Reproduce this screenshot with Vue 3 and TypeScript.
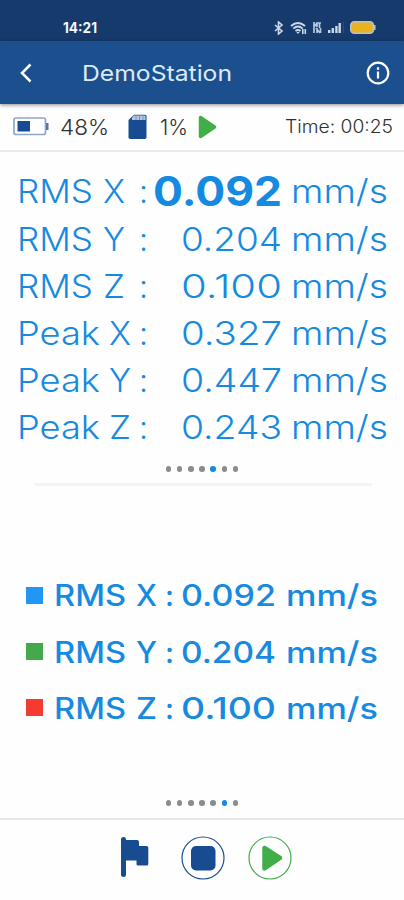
<script setup lang="ts">
import { h } from 'vue'

interface WordProps { text: string; w: number; size: number; weight?: number }

// A word stretched to a fixed advance width, sitting on a shared baseline.
const Word = (p: WordProps) =>
  h('svg', { class: 'word', width: p.w, height: p.size, viewBox: `0 0 ${p.w} ${p.size}` }, [
    h('text', {
      x: 0, y: p.size * 0.86, 'font-size': p.size, 'font-weight': p.weight ?? 300,
      textLength: p.w, lengthAdjust: 'spacingAndGlyphs', fill: 'currentColor',
    }, p.text),
  ])
Word.props = ['text', 'w', 'size', 'weight']

interface Reading { kind: string; axis: string; value: string; strong?: boolean }
const readings: Reading[] = [
  { kind: 'RMS', axis: 'X', value: '0.092', strong: true },
  { kind: 'RMS', axis: 'Y', value: '0.204' },
  { kind: 'RMS', axis: 'Z', value: '0.100' },
  { kind: 'Peak', axis: 'X', value: '0.327' },
  { kind: 'Peak', axis: 'Y', value: '0.447' },
  { kind: 'Peak', axis: 'Z', value: '0.243' },
]
const legend = [
  { axis: 'X', value: '0.092', tone: 'blue' },
  { axis: 'Y', value: '0.204', tone: 'green' },
  { axis: 'Z', value: '0.100', tone: 'red' },
]
</script>

<template>
  <main class="screen">
    <div class="status">
      <Word text="14:21" :w="34" :size="14" :weight="700" />
      <div class="sys">
        <svg width="10" height="14" viewBox="0 0 10 14"><path d="M1 4l7 6-3.500 3V1L8 4l-7 6" fill="none" stroke="#cbd9ea" stroke-width="1.600" /></svg>
        <svg width="17" height="14" viewBox="0 0 17 14"><g fill="none" stroke="#cbd9ea" stroke-width="1.900"><path d="M1 5q7-6 14 0M3.300 7.600q4.700-4 9.400 0M5.500 10q2.500-2 5 0" /></g><path d="M6.300 11h3.400L8 13zM12 8h1.600v5H12zM14.500 8h1.600v5h-1.600z" fill="#cbd9ea" /></svg>
        <svg width="9" height="12" viewBox="0 0 9 12"><path d="M1 0v5l3-4v4M5 1h3M6.500 1v5M1 6v5M3 6l4 5M4 6v5M7.500 6v5" fill="none" stroke="#b5c8df" stroke-width="1.700" /></svg>
        <svg width="16" height="12" viewBox="0 0 16 12"><path d="M0 8h2.400v3H0zM3.600 6H6v5H3.600zM7.200 4h2.400v7H7.200zM10.500 1h2.400v10h-2.400z" fill="#cbd9ea" /><path d="M14.800 0h.8v11h-.8z" fill="#3a5781" /></svg>
        <svg width="26" height="13" viewBox="0 0 26 13"><rect x=".8" y=".8" width="22.600" height="11.400" rx="3.500" fill="#e8b220" stroke="#b9c4c4" stroke-width="1.600" /><path d="M24.800 4v5" stroke="#b9c4c4" stroke-width="1.500" /></svg>
      </div>
    </div>

    <header class="bar">
      <svg class="back" width="14" height="20" viewBox="0 0 14 20"><path d="M11.500 1.500L3 10l8.500 8.500" fill="none" stroke="#fff" stroke-width="2.500" /></svg>
      <Word text="DemoStation" :w="150" :size="22" :weight="400" />
      <svg class="info" width="24" height="24" viewBox="0 0 24 24"><circle cx="12" cy="12" r="10.300" fill="none" stroke="#fff" stroke-width="2.200" /><path d="M12 10.500v7M12 6.300v2.400" stroke="#fff" stroke-width="2.200" /></svg>
    </header>

    <div class="info-row">
      <svg class="battery" width="36" height="19" viewBox="0 0 36 19"><rect x="1" y="1" width="31.500" height="16.500" rx="2" fill="#fff" stroke="#8ea7c8" stroke-width="1.700" /><path d="M33 6h2.500v7H33z" fill="#5578a8" /><path d="M4.500 4h12.500v10.500H4.500z" fill="#174d90" /></svg>
      <Word text="48%" :w="49" :size="21.5" />
      <svg class="card" width="19" height="26" viewBox="0 0 19 26"><path d="M6 .8h11q1.500 0 1.500 1.500v21q0 1.700-1.700 1.700H2.300Q.5 25 .5 23.300V6z" fill="#174d90" /><path d="M6 1.500h10.500q1 0 1 1V6H4V3.500z" fill="#b6c7dc" /><path d="M8 1.500v4.500M11.500 1.500v4.500M15 1.500v4.500" stroke="#7993b6" /></svg>
      <Word text="1%" :w="28" :size="21.5" />
      <svg class="run" width="19" height="24" viewBox="0 0 19 24"><path d="M2.500 2.500v19L16.500 12z" fill="#41ae49" stroke="#41ae49" stroke-width="3.500" stroke-linejoin="round" /></svg>
      <Word class="time" text="Time: 00:25" :w="108" :size="18" />
    </div>

    <section class="readings">
      <div v-for="r in readings" :key="r.kind + r.axis" class="reading">
        <div class="label">
          <Word :text="r.kind" :w="r.kind === 'RMS' ? 76 : 83" :size="32.5" />
          <Word :text="r.axis" :w="22" :size="32.5" />
        </div>
        <Word text=":" :w="9" :size="32.5" />
        <div class="value">
          <Word v-if="r.strong" :text="r.value" :w="129" :size="41" :weight="650" />
          <Word v-else :text="r.value" :w="101" :size="32.5" />
        </div>
        <Word text="mm/s" :w="97" :size="32.5" />
      </div>
    </section>

    <div class="dots"><i v-for="n in 7" :key="n" :class="{ on: n === 5 }" /></div>
    <hr class="divider">

    <section class="legend">
      <div v-for="l in legend" :key="l.axis" class="entry">
        <i class="swatch" :class="l.tone" />
        <div class="label">
          <Word text="RMS" :w="72" :size="29.5" :weight="550" />
          <Word :text="l.axis" :w="21" :size="29.5" :weight="550" />
        </div>
        <Word text=":" :w="9" :size="29.5" :weight="550" />
        <Word :text="l.value" :w="95" :size="29.5" :weight="550" />
        <Word text="mm/s" :w="92" :size="29.5" :weight="550" />
      </div>
    </section>

    <div class="dots"><i v-for="n in 7" :key="n" :class="{ on: n === 6 }" /></div>

    <footer class="actions">
      <svg width="30" height="42" viewBox="0 0 30 42"><path d="M3.500 3.500v35" stroke="#174d90" stroke-width="5" stroke-linecap="round" /><path d="M3.500 4H17q2 0 2 2v4h7.500q1.800 0 1.800 1.800V28q0 1.500-1.500 1.500H18q-1.500 0-1.500-1.500v-3.500h-13z" fill="#174d90" /></svg>
      <svg width="44" height="44" viewBox="0 0 44 44"><circle cx="22" cy="22" r="21" fill="none" stroke="#174d90" stroke-width="1.200" /><rect x="10" y="10" width="24.500" height="24.500" rx="5" fill="#174d90" /></svg>
      <svg width="44" height="44" viewBox="0 0 44 44"><circle cx="22" cy="22" r="21" fill="none" stroke="#41ae49" stroke-width="1.200" /><path d="M16.500 12v20.500L32 22z" fill="#41ae49" stroke="#41ae49" stroke-width="4.500" stroke-linejoin="round" /></svg>
    </footer>
  </main>
</template>

<style>
body { background: #fff; }
.word { display: block; flex: none; overflow: visible; }
</style>

<style scoped>
.screen { width: 404px; height: 900px; overflow: hidden; display: flex; flex-direction: column; background: #fefefe; font-family: Inter, "Open Sans", sans-serif; }
.status { height: 41px; flex: none; box-sizing: border-box; padding: 14px 28px 0 63px; display: flex; justify-content: space-between; align-items: center; background: #163a6c; color: #f4f7fb; }
.sys { display: flex; align-items: center; gap: 6px; }
.bar { height: 63px; flex: none; box-sizing: border-box; display: flex; align-items: center; padding: 0 14px 0 19px; background: #1b4f8e; color: #dde9f6; box-shadow: 0 1px 4px #0007; z-index: 1; }
.back { margin-right: 49px; }
.info { margin-left: auto; }
.info-row { height: 48px; flex: none; box-sizing: border-box; display: flex; align-items: center; padding: 0 11px 1px 13px; border-bottom: 2px solid #e9e9e9; color: #303030; }
.battery { margin-right: 11px; }
.card { margin: 0 13px 0 19px; }
.run { margin-left: 10px; }
.time { margin-left: auto; }
.readings { height: 293px; flex: none; box-sizing: content-box; padding: 16px 14px 0 17px; color: #168ae0; }
.reading { height: 47.2px; display: grid; grid-template-columns: 122px 10px 1fr 99px; align-items: center; }
.label { display: flex; justify-content: space-between; }
.reading .label { width: 108px; }
.reading:nth-child(n + 4) .label { width: 114px; }
.value { display: flex; justify-content: flex-end; padding-right: 9px; }
.dots { height: 6px; flex: none; display: flex; justify-content: center; gap: 5.600px; margin-top: 5px; }
.dots i { width: 5.600px; height: 5.600px; border-radius: 50%; background: #8c8c8c; }
.dots .on { background: #168ae0; }
.divider { width: 337px; height: 3px; flex: none; border: 0; background: #f3f3f3; margin: 11px auto 0 35px; }
.legend { height: 309px; flex: none; box-sizing: border-box; padding: 82px 25px 0 26px; color: #168ae0; }
.entry { height: 56.200px; display: grid; grid-template-columns: 28px 111px 16px 105px 93px; align-items: center; }
.entry .label { width: 103px; }
.swatch { width: 17px; height: 17px; position: relative; top: -1px; }
.blue { background: #2196f3; }
.green { background: #43a94b; }
.red { background: #f33b32; }
.actions { flex: 1; display: flex; align-items: flex-start; justify-content: flex-start; gap: 23px; padding: 16px 0 0 120px; margin-top: 12px; border-top: 2px solid #e7e7e7; }
.actions svg:first-child { margin-right: 8px; }
</style>
